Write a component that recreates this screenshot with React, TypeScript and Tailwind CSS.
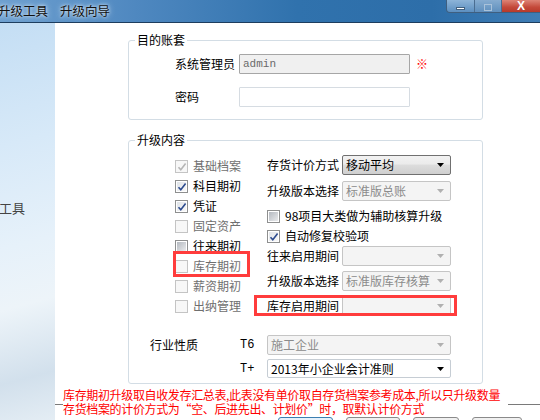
import React from 'react';

/* ----------------------------------
   Small widgets
----------------------------------- */

type BoxState = 'on' | 'onDisabled' | 'off' | 'offDisabled';

const CheckBox = ({ state }: { state: BoxState }) => {
  const disabled = state === 'onDisabled' || state === 'offDisabled';
  const checked = state === 'on' || state === 'onDisabled';
  return (
    <span
      className={
        'relative flex items-center justify-center w-[13px] h-[13px] border shrink-0 ' +
        (disabled ? 'border-[#c4c4c4] bg-[#f7f7f7]' : 'border-[#8e8f8f] bg-white')
      }
    >
      {!disabled && !checked && (
        <span className="w-[9px] h-[9px] bg-[linear-gradient(135deg,#b4b9c0,#e9eaec)]" />
      )}
      {!disabled && checked && (
        <span className="w-[9px] h-[9px] bg-[linear-gradient(135deg,#dfe3e8,#f8f8f8)]" />
      )}
      {checked && (
        <svg className="absolute left-[1px] top-[1px]" width="10" height="10" viewBox="0 0 10 10">
          <path
            d="M1.5 5.2 L3.8 7.8 L8.6 1.6"
            fill="none"
            stroke={disabled ? '#b5b5b5' : '#2d4b8e'}
            strokeWidth="1.6"
          />
        </svg>
      )}
    </span>
  );
};

const Arrow = ({ dim }: { dim?: boolean }) => (
  <svg width="7" height="4" viewBox="0 0 7 4">
    <path d="M0 0H7L3.5 4Z" fill={dim ? '#b0b0b0' : '#000'} />
  </svg>
);

interface SelectProps {
  value?: string;
  width: string;
  kind: 'button' | 'white' | 'disabled';
  h?: string;
}

const Select = ({ value = '', width, kind, h = 'h-[20px]' }: SelectProps) => {
  const look =
    kind === 'button'
      ? 'border-[#707070] bg-[linear-gradient(#f2f2f2,#ebebeb_45%,#dddddd_50%,#cfcfcf)] text-black'
      : kind === 'white'
      ? 'border-[#c6cdd4] bg-white text-black'
      : 'border-[#c5c5c5] bg-[#f4f4f4] text-[#8b8b8b]';
  return (
    <div className={`${width} ${h} shrink-0 flex items-center justify-between border rounded-[2px] pl-[3px] pr-[6px] ${look}`}>
      <span className="leading-none whitespace-nowrap">{value}</span>
      <Arrow dim={kind === 'disabled'} />
    </div>
  );
};

/* ----------------------------------
   Component
----------------------------------- */

const leftItems: { label: string; state: BoxState; gray: boolean; mark?: boolean }[] = [
  { label: '基础档案', state: 'onDisabled', gray: true },
  { label: '科目期初', state: 'on', gray: false },
  { label: '凭证', state: 'on', gray: false },
  { label: '固定资产', state: 'offDisabled', gray: true },
  { label: '往来期初', state: 'off', gray: false },
  { label: '库存期初', state: 'offDisabled', gray: true, mark: true },
  { label: '薪资期初', state: 'offDisabled', gray: true },
  { label: '出纳管理', state: 'offDisabled', gray: true },
];

export default function App() {
  return (
    <div className="w-[540px] h-[420px] overflow-hidden bg-white text-[12px] text-black font-['Noto_Sans_CJK_SC',sans-serif]">
      {/* title bar */}
      <div className="flex justify-between h-[23px] border-b border-[#1d3d5e] bg-[linear-gradient(90deg,#6d9fcf_0%,#4f88c0_25%,#3072ad_55%,#2d6ea9_80%,#3f7db5_100%)]">
        <div className="flex items-center gap-[12px] ml-[-2px] text-[12.5px] text-[#111] whitespace-nowrap [text-shadow:0_0_6px_#dbeaf7,0_0_3px_#dbeaf7]">
          <span>升级工具</span>
          <span>升级向导</span>
        </div>
        <div className="flex h-[13px] border-l border-b border-[#3f5f80] rounded-bl-[4px] overflow-hidden">
          <div className="w-[28px] flex items-end justify-center pb-[2px] bg-[linear-gradient(#8db4d8,#5c8fc0)] border-r border-[#4a6d91]">
            <span className="w-[9px] h-[3px] bg-white border border-[#42617f]" />
          </div>
          <div className="w-[27px] flex items-end justify-center pb-[1px] bg-[linear-gradient(#86acd0,#5f8fbd)] border-r border-[#4a6d91]">
            <span className="w-[8px] h-[7px] border border-[#a9c2da]" />
          </div>
          <div className="w-[38px] flex items-end justify-center bg-[linear-gradient(#dd8476,#c4493a_60%,#b63a2b)]">
            <span className="text-white text-[12px] font-bold leading-[11px] font-['Liberation_Sans',sans-serif]">X</span>
          </div>
        </div>
      </div>

      <div className="flex h-[397px]">
        {/* left decoration panel */}
        <div className="w-[55px] shrink-0 flex flex-col overflow-hidden bg-[linear-gradient(165deg,#c4def4_0%,#d7e9f8_30%,#e6f1fa_55%,#edf4f9_70%,#d2e0ec_88%,#e4edf4_100%)]">
          <div className="mt-[175px] ml-[-27px] text-[13px] text-[#444] whitespace-nowrap">升级工具</div>
        </div>

        {/* main */}
        <div className="flex-1 flex flex-col">
          <fieldset className="ml-[73px] mt-[9px] w-[355px] border border-[#d3dde5] rounded-[3px] pb-[12px]">
            <legend className="ml-[6px] px-[2px] leading-[16px]">目的账套</legend>
            <div className="flex items-center mt-[6px] pl-[46px] h-[20px]">
              <span className="w-[64px] whitespace-nowrap">系统管理员</span>
              <div className="w-[171px] h-[20px] flex items-center border border-[#a6a6a6] rounded-[1px] bg-[#f0f0f0] pl-[3px] text-[11px] text-[#6a6a6a] font-['Liberation_Mono',monospace]">
                admin
              </div>
              <span className="ml-[6px] text-[#ff0000] text-[12px]">※</span>
            </div>
            <div className="flex items-center mt-[13px] pl-[46px] h-[20px]">
              <span className="w-[64px]">密码</span>
              <div className="w-[171px] h-[20px] border border-[#d6dce2] rounded-[1px] bg-white" />
            </div>
          </fieldset>

          <fieldset className="ml-[73px] mt-[12px] w-[355px] border border-[#d3dde5] rounded-[3px] pb-[5px]">
            <legend className="ml-[6px] px-[2px] leading-[16px]">升级内容</legend>
            <div className="flex mt-[7px]">
              {/* left checkboxes */}
              <div className="w-[138px] shrink-0 pl-[46px] mt-[1px] flex flex-col">
                {leftItems.map((it) => (
                  <div key={it.label} className="relative h-[20px] flex items-center gap-[5px] whitespace-nowrap">
                    <CheckBox state={it.state} />
                    <span className={it.gray ? 'text-[#6f6f6f]' : 'text-black'}>{it.label}</span>
                    {it.mark && (
                      <span className="absolute left-[-2px] top-[-5px] w-[77px] h-[26px] border-[3px] border-[#ff3c3c]" />
                    )}
                  </div>
                ))}
              </div>

              {/* right options */}
              <div className="flex flex-col whitespace-nowrap">
                <div className="flex items-center h-[20px]">
                  <span className="w-[75px]">存货计价方式</span>
                  <Select value="移动平均" width="w-[109px]" kind="button" />
                </div>
                <div className="flex items-center h-[20px] mt-[6px]">
                  <span className="w-[75px]">升级版本选择</span>
                  <Select value="标准版总账" width="w-[109px]" kind="disabled" />
                </div>
                <div className="flex items-center gap-[5px] h-[20px] mt-[5px]">
                  <CheckBox state="off" />
                  <span>98项目大类做为辅助核算升级</span>
                </div>
                <div className="flex items-center gap-[5px] h-[20px]">
                  <CheckBox state="on" />
                  <span>自动修复校验项</span>
                </div>
                <div className="flex items-center h-[20px]">
                  <span className="w-[75px]">往来启用期间</span>
                  <Select width="w-[109px]" kind="disabled" />
                </div>
                <div className="flex items-center h-[20px] mt-[5px]">
                  <span className="w-[75px]">升级版本选择</span>
                  <Select value="标准版库存核算" width="w-[109px]" kind="disabled" />
                </div>
                <div className="relative flex items-center h-[20px] mt-[5px]">
                  <span className="w-[75px]">库存启用期间</span>
                  <Select width="w-[109px]" kind="disabled" />
                  <span className="absolute left-[-13px] top-[-1px] w-[203px] h-[21px] border-[3px] border-[#ff3c3c]" />
                </div>
              </div>
            </div>

            <div className="flex mt-[19px] pl-[21px]">
              <span className="w-[90px] h-[20px] flex items-center">行业性质</span>
              <div className="flex flex-col">
                <div className="flex items-center h-[20px]">
                  <span className="w-[27px] font-['Liberation_Mono',monospace] text-[12px]">T6</span>
                  <Select value="施工企业" width="w-[184px]" kind="disabled" h="h-[20px]" />
                </div>
                <div className="flex items-center h-[19px] mt-[4px]">
                  <span className="w-[27px] font-['Liberation_Mono',monospace] text-[12px]">T+</span>
                  <Select value="2013年小企业会计准则" width="w-[184px]" kind="white" h="h-[19px]" />
                </div>
              </div>
            </div>
          </fieldset>

          {/* note + separator */}
          <div className="flex mt-[4px]">
            <div className="w-[8px] mt-[16px] h-0 border-t border-[#7a7a7a]" />
            <p className="w-[445px] text-[#ff0000] text-[12px] leading-[14px] tracking-[-0.35px] whitespace-nowrap">
              库存期初升级取自收发存汇总表,此表没有单价取自存货档案参考成本,所以只升级数量
              <br />
              存货档案的计价方式为“空、后进先出、计划价”时，取默认计价方式
            </p>
            <div className="flex-1 mt-[16px] h-0 border-t border-[#7a7a7a]" />
          </div>

          {/* buttons (cut off) */}
          <div className="flex ml-[223px] mt-[1px]">
            <div className="w-[55px] h-[20px] border border-[#3c7fb1] rounded-[3px] bg-[#e5f1fb]" />
            <div className="w-[54px] h-[20px] ml-[13px] border border-[#8a8a8a] rounded-[3px] bg-[#f0f0f0]" />
            <div className="w-[46px] h-[20px] ml-[13px] border border-[#8a8a8a] rounded-[3px] bg-[#f0f0f0]" />
            <div className="w-[50px] h-[20px] ml-[13px] border border-[#8a8a8a] rounded-[3px] bg-[#f0f0f0]" />
          </div>
        </div>
      </div>
    </div>
  );
}
